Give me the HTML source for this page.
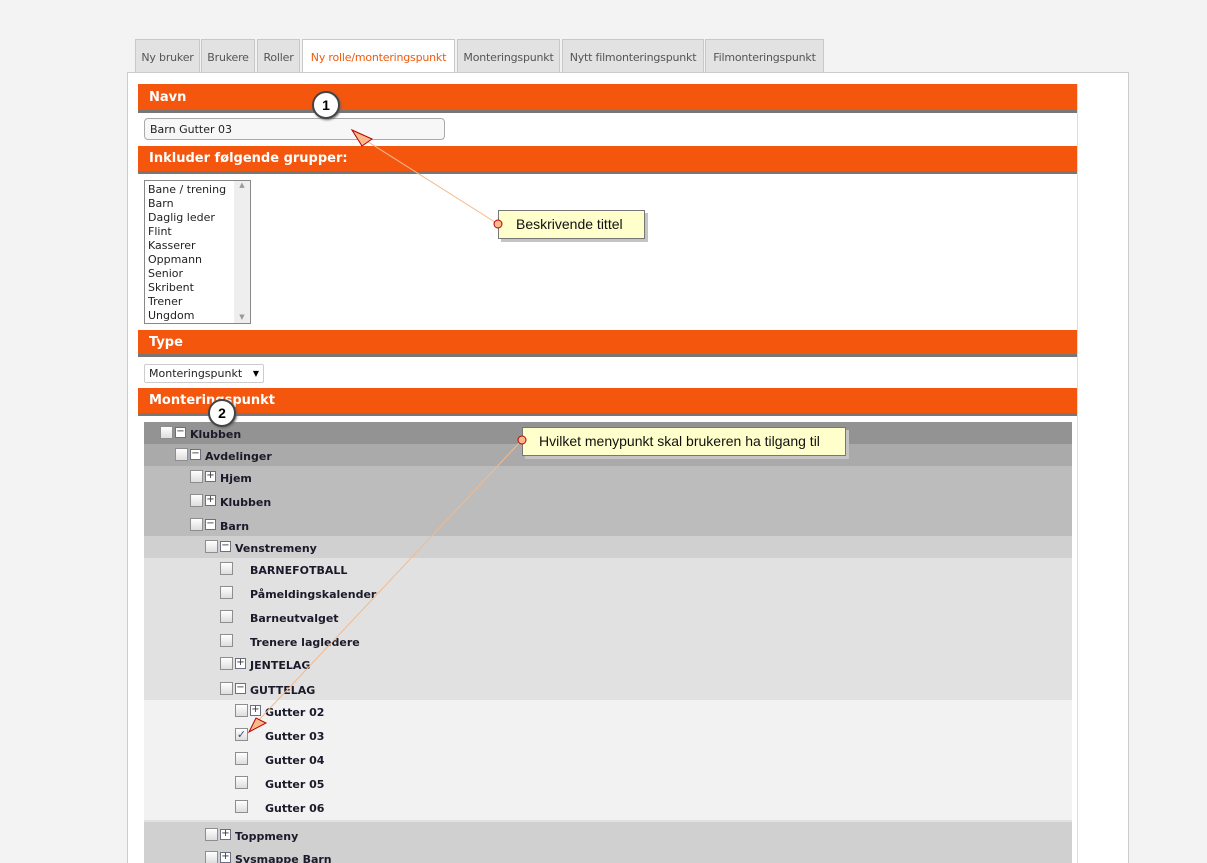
<!DOCTYPE html>
<html><head><meta charset="utf-8"><style>
*{margin:0;padding:0;box-sizing:border-box}
html,body{width:1207px;height:863px;overflow:hidden}
body{background:#f3f3f3;font-family:Verdana,"DejaVu Sans",sans-serif;position:relative}
.a{position:absolute}
.tab{position:absolute;top:39px;height:33px;background:#e2e2e2;border:1px solid #c8c8c8;border-bottom:none;font-size:11px;color:#555;text-align:center;line-height:36px;font-family:"DejaVu Sans",sans-serif;letter-spacing:-0.2px}
.tab.act{background:#fff;color:#f05a0c;height:34px}
.panel{position:absolute;left:127px;top:72px;width:1002px;height:820px;background:#fff;border:1px solid #ccc}
.sec{position:absolute;left:138px;width:940px;border-right:1px solid #ddd}
.hdr{position:absolute;left:138px;width:939px;background:#f5560e;border-bottom:3px solid #777;color:#fff;font-weight:bold;font-size:13px;padding-left:11px;font-family:"DejaVu Sans",sans-serif}
.lb{font-size:11px;color:#222;font-family:"DejaVu Sans",sans-serif}
.row{position:absolute;left:144px;width:928px}
.cb{position:absolute;width:13px;height:13px;border:1px solid #8e8e8e;background:linear-gradient(#fff,#ddd)}
.ex{position:absolute;width:11px;height:11px;border:1px solid #6a7080;background:#fff;font-size:10px;line-height:8px;text-align:center;color:#333}
.t{position:absolute;font-size:11px;font-weight:bold;color:#1a1a2a;font-family:"DejaVu Sans",sans-serif}
.call{position:absolute;background:#ffffcc;border:1px solid #777;box-shadow:3px 3px 0 #c4c4c4;font-family:"Liberation Sans",Arial,sans-serif;font-size:14px;color:#111}
.num{position:absolute;width:28px;height:28px;border-radius:50%;border:2px solid #444;background:#fff;font:bold 14px "Liberation Sans",Arial,sans-serif;text-align:center;line-height:24px;box-shadow:1px 1px 2px #666}
</style></head><body>
<div class="tab" style="left:135px;width:65px">Ny bruker</div>
<div class="tab" style="left:201px;width:54px">Brukere</div>
<div class="tab" style="left:257px;width:43px">Roller</div>
<div class="tab act" style="left:302px;width:153px">Ny rolle/monteringspunkt</div>
<div class="tab" style="left:457px;width:103px">Monteringspunkt</div>
<div class="tab" style="left:562px;width:142px">Nytt filmonteringspunkt</div>
<div class="tab" style="left:705px;width:119px">Filmonteringspunkt</div>
<div class="panel"></div>
<div class="sec" style="top:84px;height:800px"></div>

<div class="hdr" style="top:84px;height:29px;line-height:27px">Navn</div>
<div class="a lb" style="left:144px;top:118px;width:301px;height:22px;border:1px solid #aaa;border-radius:4px;background:#f7f7f7;padding-left:5px;line-height:21px">Barn Gutter 03</div>

<div class="hdr" style="top:146px;height:28px;line-height:26px">Inkluder følgende grupper:</div>
<div class="a" style="left:144px;top:180px;width:107px;height:144px;border:1px solid #888;background:#fff">
<div class="lb" style="padding:2px 0 0 3px;line-height:14px">Bane / trening<br>Barn<br>Daglig leder<br>Flint<br>Kasserer<br>Oppmann<br>Senior<br>Skribent<br>Trener<br>Ungdom</div>
<div class="a" style="right:0;top:0;width:16px;height:142px;background:#eee;font-size:7px;color:#999;text-align:center">▲<div style="position:absolute;bottom:2px;width:16px">▼</div></div>
</div>

<div class="hdr" style="top:330px;height:27px;line-height:26px">Type</div>
<div class="a lb" style="left:144px;top:364px;width:120px;height:19px;border:1px solid #ccc;border-radius:2px;padding-left:4px;line-height:17px">Monteringspunkt <span style="position:absolute;right:4px;font-size:8px;color:#000">▼</span></div>

<div class="hdr" style="top:388px;height:28px;line-height:26px">Monteringspunkt</div>

<div class="row" style="top:422px;height:22px;background:#939393"></div>
<div class="row" style="top:444px;height:22px;background:#aaaaaa"></div>
<div class="row" style="top:466px;height:70px;background:#bcbcbc"></div>
<div class="row" style="top:536px;height:22px;background:#d0d0d0"></div>
<div class="row" style="top:558px;height:142px;background:#e1e1e1"></div>
<div class="row" style="top:700px;height:120px;background:#f2f2f2"></div>
<div class="row" style="top:820px;height:2px;background:#e1e1e1"></div>
<div class="row" style="top:822px;height:50px;background:#d0d0d0"></div>

<div class="cb" style="left:160px;top:426px"></div><div class="ex" style="left:175px;top:427px">−</div><div class="t" style="left:190px;top:428px">Klubben</div>
<div class="cb" style="left:175px;top:448px"></div><div class="ex" style="left:190px;top:449px">−</div><div class="t" style="left:205px;top:450px">Avdelinger</div>
<div class="cb" style="left:190px;top:470px"></div><div class="ex" style="left:205px;top:471px">+</div><div class="t" style="left:220px;top:472px">Hjem</div>
<div class="cb" style="left:190px;top:494px"></div><div class="ex" style="left:205px;top:495px">+</div><div class="t" style="left:220px;top:496px">Klubben</div>
<div class="cb" style="left:190px;top:518px"></div><div class="ex" style="left:205px;top:519px">−</div><div class="t" style="left:220px;top:520px">Barn</div>
<div class="cb" style="left:205px;top:540px"></div><div class="ex" style="left:220px;top:541px">−</div><div class="t" style="left:235px;top:542px">Venstremeny</div>
<div class="cb" style="left:220px;top:562px"></div><div class="t" style="left:250px;top:564px">BARNEFOTBALL</div>
<div class="cb" style="left:220px;top:586px"></div><div class="t" style="left:250px;top:588px">Påmeldingskalender</div>
<div class="cb" style="left:220px;top:610px"></div><div class="t" style="left:250px;top:612px">Barneutvalget</div>
<div class="cb" style="left:220px;top:634px"></div><div class="t" style="left:250px;top:636px">Trenere lagledere</div>
<div class="cb" style="left:220px;top:657px"></div><div class="ex" style="left:235px;top:658px">+</div><div class="t" style="left:250px;top:659px">JENTELAG</div>
<div class="cb" style="left:220px;top:682px"></div><div class="ex" style="left:235px;top:683px">−</div><div class="t" style="left:250px;top:684px">GUTTELAG</div>
<div class="cb" style="left:235px;top:704px"></div><div class="ex" style="left:250px;top:705px">+</div><div class="t" style="left:265px;top:706px">Gutter 02</div>
<div class="cb" style="left:235px;top:728px;font-size:11px;color:#3a4a9a;line-height:11px;text-align:center">✓</div><div class="t" style="left:265px;top:730px">Gutter 03</div>
<div class="cb" style="left:235px;top:752px"></div><div class="t" style="left:265px;top:754px">Gutter 04</div>
<div class="cb" style="left:235px;top:776px"></div><div class="t" style="left:265px;top:778px">Gutter 05</div>
<div class="cb" style="left:235px;top:800px"></div><div class="t" style="left:265px;top:802px">Gutter 06</div>
<div class="cb" style="left:205px;top:828px"></div><div class="ex" style="left:220px;top:829px">+</div><div class="t" style="left:235px;top:830px">Toppmeny</div>
<div class="cb" style="left:205px;top:851px"></div><div class="ex" style="left:220px;top:852px">+</div><div class="t" style="left:235px;top:853px">Sysmappe Barn</div>

<svg class="a" style="left:0;top:0" width="1207" height="863">
<line x1="498" y1="224" x2="362" y2="138" stroke="#f5b98a" stroke-width="1"/>
<polygon points="352,130 372,139 362,146" fill="#f9b98a" stroke="#b00" stroke-width="1"/>
<line x1="522" y1="440" x2="257" y2="722" stroke="#f5b98a" stroke-width="1"/>
<polygon points="249,732 256,718 266,723" fill="#f9b98a" stroke="#b00" stroke-width="1"/>
</svg>
<div class="call" style="left:498px;top:210px;width:147px;height:29px;padding-left:17px;line-height:27px">Beskrivende tittel</div>
<div class="call" style="left:522px;top:427px;width:324px;height:29px;padding-left:16px;line-height:27px">Hvilket menypunkt skal brukeren ha tilgang til</div>
<svg class="a" style="left:0;top:0" width="1207" height="863">
<circle cx="498" cy="224" r="4" fill="#f9b98a" stroke="#b00"/>
<circle cx="522" cy="440" r="4" fill="#f9b98a" stroke="#b00"/>
</svg>
<div class="num" style="left:312px;top:91px">1</div>
<div class="num" style="left:208px;top:399px">2</div>
</body></html>
